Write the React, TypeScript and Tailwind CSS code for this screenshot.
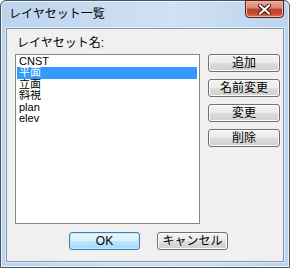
const FONT = { fontFamily: '"Liberation Sans", "Noto Sans CJK JP", sans-serif' };

const ITEMS = ["CNST", "平面", "立面", "斜視", "plan", "elev"];
const SIDE = ["追加", "名前変更", "変更", "削除"];

function Btn({ label, primary = false, w = "w-[72px]" }: { label: string; primary?: boolean; w?: string }) {
  return (
    <button
      type="button"
      className={`${w} h-[18px] rounded-[3px] border text-[12px] leading-none text-black flex items-center justify-center ${
        primary
          ? "border-[#3c7fb1] bg-[linear-gradient(#eaf6fd_0%,#d9f0fc_50%,#bee6fd_51%,#a7d9f5_100%)] shadow-[inset_0_0_0_1px_#bfe7fa]"
          : "border-[#707070] bg-[linear-gradient(#f2f2f2_0%,#ebebeb_50%,#dddddd_51%,#cfcfcf_100%)] shadow-[inset_0_0_0_1px_#fcfcfc]"
      }`}
    >
      {label}
    </button>
  );
}

export default function App() {
  return (
    <div style={FONT} className="w-[290px] h-[268px] overflow-hidden">
      <div className="w-[290px] h-[268px] rounded-t-[6px] border border-[#4a5563] bg-[linear-gradient(90deg,#bcd4ee,#cfe1f5_60%,#bcd4ee)] shadow-[inset_0_0_0_1px_#e9f2fb] flex flex-col">
        <div className="h-[27px] flex items-start justify-between pl-[8px] pr-[5px]">
          <span className="mt-[6px] text-[12px] leading-[14px] text-black">レイヤセット一覧</span>
          <div className="relative w-[39px] h-[18px] -mt-px rounded-b-[4px] border border-[#4f1f18] bg-[linear-gradient(#e9a999_0%,#d98672_45%,#c23f27_50%,#c74b33_80%,#e07b5f_100%)] shadow-[inset_0_0_0_1px_#f0b6a6] flex items-center justify-center">
            <svg width="13" height="11" viewBox="0 0 13 11">
              <path d="M2 1.5 L11 9.5 M11 1.5 L2 9.5" stroke="#3a1510" strokeWidth="4" strokeLinecap="square" />
              <path d="M2 1.5 L11 9.5 M11 1.5 L2 9.5" stroke="#ffffff" strokeWidth="2" strokeLinecap="square" />
            </svg>
          </div>
        </div>
        <div className="mx-[5px] h-[234px] border border-[#8795a8] bg-[#f0f0f0] shadow-[0_0_0_1px_#ffffff80]">
          <div className="pl-[8px] pt-[7px]">
            <div className="pl-[2px] h-[14px] text-[12px] leading-[14px] text-black">レイヤセット名:</div>
            <div className="flex mt-[4px]">
              <div className="w-[185px] h-[170px] border border-[#828790] bg-white pt-[1px] pl-px pr-[2px]">
                {ITEMS.map((t, i) => (
                  <div
                    key={t}
                    className={`h-[11.4px] text-[11px] leading-[11.4px] pl-[2px] overflow-hidden ${
                      i === 1 ? "bg-[#3399ff] text-white" : "text-black"
                    }`}
                  >
                    {t}
                  </div>
                ))}
              </div>
              <div className="ml-[8px] flex flex-col gap-[7px]">
                {SIDE.map((s) => (
                  <Btn key={s} label={s} />
                ))}
              </div>
            </div>
            <div className="flex gap-[17px] mt-[8px] pl-[54px]">
              <Btn label="OK" primary w="w-[71px]" />
              <Btn label="キャンセル" w="w-[71px]" />
            </div>
          </div>
        </div>
      </div>
    </div>
  );
}
